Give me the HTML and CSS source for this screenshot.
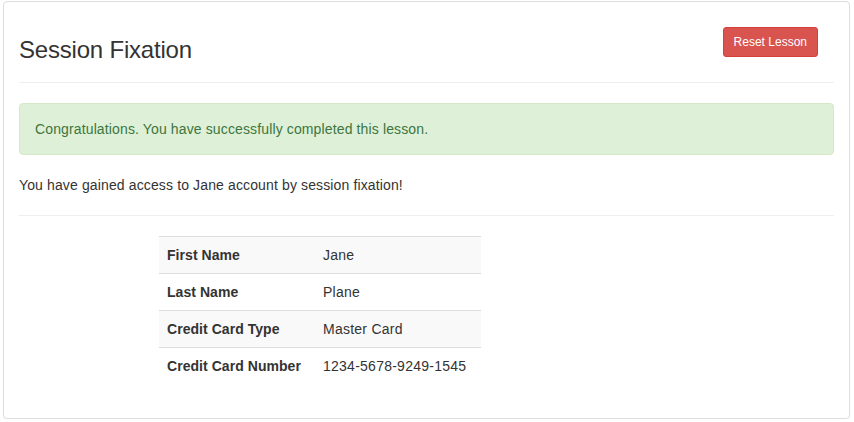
FILE: index.html
```html
<!DOCTYPE html>
<html lang="en">
<head>
<meta charset="utf-8">
<title>Session Fixation</title>
<link rel="stylesheet" href="styles.css">
</head>
<body>
<div class="page">
  <div class="panel">
    <div class="header">
      <h3 class="title">Session Fixation</h3>
      <button class="btn-reset" type="button">Reset Lesson</button>
    </div>
    <div class="alert">Congratulations. You have successfully completed this lesson.</div>
    <p class="message">You have gained access to Jane account by session fixation!</p>
    <hr class="divider">
    <table class="info">
      <colgroup><col class="col-label"><col></colgroup>
      <tbody>
        <tr><th>First Name</th><td>Jane</td></tr>
        <tr><th>Last Name</th><td>Plane</td></tr>
        <tr><th>Credit Card Type</th><td>Master Card</td></tr>
        <tr><th>Credit Card Number</th><td>1234-5678-9249-1545</td></tr>
      </tbody>
    </table>
  </div>
</div>
</body>
</html>
```
FILE: styles.css
```css
* { box-sizing: border-box; }
html, body { margin: 0; padding: 0; background: #fff; }
body {
  font-family: "Liberation Sans", Arial, Helvetica, sans-serif;
  font-size: 14px;
  line-height: 20px;
  color: #333;
  letter-spacing: 0.13px;
}
.page { padding: 1px 5px 0 3px; }
.panel {
  width: 847px;
  height: 418px;
  border: 1px solid #ddd;
  border-radius: 4px;
  padding: 15px;
  box-shadow: 0 1px 1px rgba(0,0,0,0.05);
}
.header {
  display: flex;
  justify-content: space-between;
  align-items: flex-start;
  padding-bottom: 19px;
  border-bottom: 1px solid #eee;
}
.title {
  margin: 20px 0 0 0;
  font-size: 24px;
  line-height: 26px;
  font-weight: 500;
  color: #333;
  letter-spacing: -0.2px;
}
.btn-reset {
  margin: 10px 16px 0 0;
  padding: 5px 10px;
  font-family: inherit;
  font-size: 12px;
  line-height: 18px;
  letter-spacing: 0;
  color: #fff;
  background: #d9534f;
  border: 1px solid #d43f3a;
  border-radius: 3px;
}
.alert {
  margin: 20px 0 20px 0;
  padding: 15px;
  background: #dff0d8;
  border: 1px solid #d6e9c6;
  border-radius: 4px;
  color: #3c763d;
}
.message { margin: 0; }
.divider {
  margin: 20px 0;
  border: 0;
  border-top: 1px solid #eee;
  height: 0;
}
.info {
  margin: 0 0 19px 140px;
  width: 322px;
  table-layout: fixed;
  border-collapse: collapse;
  border-spacing: 0;
}
.col-label { width: 156px; }
.info th, .info td {
  padding: 8px;
  line-height: 20px;
  text-align: left;
  vertical-align: top;
  border-top: 1px solid #ddd;
  white-space: nowrap;
}
.info th { font-weight: bold; letter-spacing: 0.05px; }
.info td { font-weight: normal; letter-spacing: 0.25px; }
.info tr:nth-child(odd) { background: #f9f9f9; }
```
